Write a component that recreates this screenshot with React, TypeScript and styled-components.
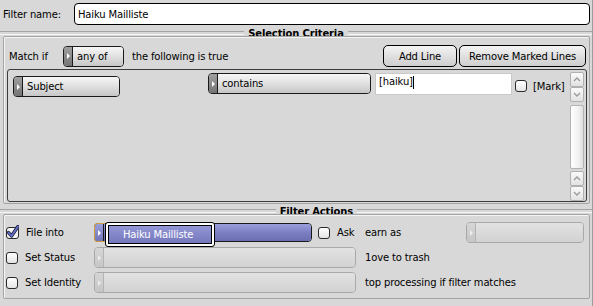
import React from "react";
import styled, { createGlobalStyle, css } from "styled-components";

const PageStyle = createGlobalStyle`
  html, body {
    margin: 0;
    padding: 0;
    background: #d8d8d8;
  }
  body {
    font-family: "DejaVu Sans", "Liberation Sans", sans-serif;
    font-size: 10px;
    letter-spacing: -0.15px;
    color: #000;
  }
  * { box-sizing: border-box; }
`;

const Window = styled.div`
  width: 593px;
  height: 306px;
  background: #d8d8d8;
  border-right: 1px solid #9c9c9c;
  display: flex;
  flex-direction: column;
  overflow: hidden;
`;

const NameRow = styled.div`
  display: flex;
  align-items: center;
  padding: 3px 2px 0 3px;
  height: 25px;
`;

const Label = styled.span`
  white-space: nowrap;
`;

const NameLabel = styled(Label)`
  width: 71px;
`;

const TextField = styled.div<{ $width?: number; $radius?: number }>`
  height: 22px;
  ${(p) => (p.$width ? css`width: ${p.$width}px;` : css`flex: 1;`)}
  background: #fff;
  border: 1px solid ${(p) => (p.$radius ? "#000" : "#c8c8c8")};
  border-radius: ${(p) => p.$radius ?? 0}px;
  padding: 0 3px;
  display: flex;
  align-items: center;
`;

const Caret = styled.span`
  display: inline-block;
  width: 1px;
  height: 13px;
  background: #000;
`;

const Header = styled.div<{ $left: number; $right: number; $top: number }>`
  display: flex;
  align-items: center;
  height: 12px;
  margin-top: ${(p) => p.$top}px;
  gap: 4px;
  &::before,
  &::after {
    content: "";
    height: 2px;
    border-top: 1px solid #a4a4a4;
    border-bottom: 1px solid #f4f4f4;
  }
  &::before { flex: ${(p) => p.$left}; }
  &::after { flex: ${(p) => p.$right}; }
`;

const Title = styled.span`
  font-weight: bold;
  white-space: nowrap;
`;

const Box = styled.section<{ $pad: string }>`
  margin: -3px 2px 0 3px;
  border: 1px solid #a4a4a4;
  border-radius: 2px;
  box-shadow: inset 1px 1px 0 #f4f4f4;
  padding: ${(p) => p.$pad};
  display: flex;
  flex-direction: column;
`;

const MatchRow = styled.div`
  display: flex;
  align-items: center;
  height: 22px;
  padding-left: 2px;
`;

const Button = styled.button<{ $width: number }>`
  height: 22px;
  width: ${(p) => p.$width}px;
  font: inherit;
  letter-spacing: inherit;
  color: #000;
  border: 1px solid #000;
  border-radius: 5px;
  background: linear-gradient(#f4f4f4, #dcdcdc 60%, #cfcfcf);
  padding: 0;
`;

const Spacer = styled.div`
  flex: 1;
`;

const ButtonGroup = styled.div`
  display: flex;
  gap: 2px;
  margin-right: 1px;
`;

const List = styled.div`
  margin-top: 2px;
  height: 133px;
  border: 1px solid #3c3c3c;
  border-radius: 3px;
  display: flex;
  padding-right: 2px;
`;

const ListContent = styled.div`
  flex: 1;
  display: flex;
  align-items: flex-start;
  padding: 3px 0 0 5px;
`;

const Scroll = styled.div`
  width: 14px;
  display: flex;
  flex-direction: column;
  padding-top: 2px;
`;

const ArrowBtn = styled.div`
  height: 15px;
  border: 1px solid #b0b0b0;
  border-radius: 2px;
  background: linear-gradient(#fafafa, #e2e2e2);
  display: flex;
  align-items: center;
  justify-content: center;
`;

const Thumb = styled.div`
  flex: 1;
  margin: 3px 0 2px;
  border: 1px solid #b4b4b4;
  border-radius: 2px;
  background: linear-gradient(90deg, #ffffff, #f2f2f2 60%, #dedede);
`;

const Field = styled.div<{ $width: number; $disabled?: boolean; $height?: number }>`
  position: relative;
  width: ${(p) => p.$width}px;
  height: ${(p) => p.$height ?? 21}px;
  display: flex;
  border: 1px solid ${(p) => (p.$disabled ? "#a8a8a8" : "#1a1a1a")};
  border-radius: 4px;
  flex-shrink: 0;
`;

const FieldArrow = styled.div<{ $disabled?: boolean; $focus?: boolean }>`
  width: 9px;
  border-radius: 3px 0 0 3px;
  border-right: 1px solid ${(p) => (p.$disabled ? "#b4b4b4" : "#1a1a1a")};
  background: ${(p) =>
    p.$disabled
      ? "linear-gradient(#d6d6d6, #c6c6c6)"
      : p.$focus
      ? "linear-gradient(#9a9ed8, #7276b8)"
      : "linear-gradient(#a0a0a0, #747474)"};
  ${(p) => p.$focus && css`box-shadow: 0 0 0 1px #d0a040;`}
  display: flex;
  align-items: center;
  justify-content: center;
  &::after {
    content: "";
    border-left: 3px solid ${(p) => (p.$disabled ? "#ececec" : "#fff")};
    border-top: 3px solid transparent;
    border-bottom: 3px solid transparent;
  }
`;

const FieldLabel = styled.div<{ $disabled?: boolean; $selected?: boolean }>`
  flex: 1;
  border-radius: 0 3px 3px 0;
  padding-left: 4px;
  display: flex;
  align-items: center;
  background: ${(p) =>
    p.$selected
      ? "linear-gradient(#9a9edc, #7c80c2 50%, #6a6eb2)"
      : p.$disabled
      ? "linear-gradient(#e2e2e2, #d2d2d2)"
      : "linear-gradient(#f6f6f6, #e0e0e0 50%, #c6c6c6)"};
  white-space: nowrap;
`;

const Popup = styled.div`
  position: absolute;
  left: 10px;
  top: -2px;
  width: 110px;
  height: 25px;
  border: 1px solid #000;
  border-radius: 3px;
  background: #fff;
  padding: 2px;
`;

const PopupItem = styled.div`
  height: 100%;
  border: 1px solid #000;
  background: linear-gradient(#9296d6, #7579bc);
  color: #fff;
  padding-left: 14px;
  display: flex;
  align-items: center;
`;

const Check = styled.div`
  width: 12px;
  height: 12px;
  border: 1px solid #2a2a2a;
  border-radius: 3px;
  background: linear-gradient(#ffffff, #e4e4e4);
  flex-shrink: 0;
`;

const CheckLabel = styled.div<{ $gap?: number }>`
  display: flex;
  align-items: center;
  gap: ${(p) => p.$gap ?? 7}px;
`;

const Actions = styled.div`
  display: grid;
  grid-template-columns: 88px 271px 1fr;
  grid-auto-rows: 25px;
  align-items: center;
`;

const Cell = styled.div`
  display: flex;
  align-items: center;
`;

const CheckedBox = () => (
  <svg width="13" height="14" viewBox="0 0 13 14" style={{ marginTop: -2 }}>
    <rect x="0.5" y="2.5" width="12" height="11" rx="2.5" fill="#f4f4f4" stroke="#2a2a2a" />
    <path d="M2.5 7.5 L5.5 11 L12 1.5" fill="none" stroke="#1c1c3c" strokeWidth="3.4" strokeLinecap="round" strokeLinejoin="round" />
    <path d="M2.5 7.5 L5.5 11 L12 1.5" fill="none" stroke="#6470c8" strokeWidth="1.8" strokeLinecap="round" strokeLinejoin="round" />
  </svg>
);

const Chevron = ({ up }: { up?: boolean }) => (
  <svg width="8" height="5" viewBox="0 0 8 5">
    <path d={up ? "M1 4 L4 1 L7 4" : "M1 1 L4 4 L7 1"} fill="none" stroke="#9a9a9a" strokeWidth="1.3" />
  </svg>
);

type MenuProps = {
  width: number;
  label?: string;
  disabled?: boolean;
  selected?: boolean;
  height?: number;
  children?: React.ReactNode;
};

const MenuField = ({ width, label, disabled, selected, height, children }: MenuProps) => (
  <Field $width={width} $disabled={disabled} $height={height}>
    <FieldArrow $disabled={disabled} $focus={selected} />
    <FieldLabel $disabled={disabled} $selected={selected}>
      {label}
    </FieldLabel>
    {children}
  </Field>
);

const App = () => {
  return (
    <>
      <PageStyle />
      <Window>
        <NameRow>
          <NameLabel>Filter name:</NameLabel>
          <TextField $radius={4}>Haiku Mailliste</TextField>
        </NameRow>

        <Header $top={2} $left={1} $right={1}>
          <Title>Selection Criteria</Title>
        </Header>
        <Box $pad="8px 2px 1px 3px">
          <MatchRow>
            <Label style={{ width: 54 }}>Match if</Label>
            <MenuField width={61} label="any of" />
            <Label style={{ marginLeft: 8 }}>the following is true</Label>
            <Spacer />
            <ButtonGroup>
              <Button $width={74}>Add Line</Button>
              <Button $width={127}>Remove Marked Lines</Button>
            </ButtonGroup>
          </MatchRow>
          <List>
            <ListContent>
              <div style={{ marginTop: 3 }}>
                <MenuField width={107} label="Subject" />
              </div>
              <div style={{ marginLeft: 88 }}>
                <MenuField width={163} label="contains" />
              </div>
              <TextField $width={137} style={{ marginLeft: 4, alignItems: "flex-start", paddingTop: 2 }}>
                [haiku]
                <Caret />
              </TextField>
              <CheckLabel $gap={6} style={{ marginLeft: 3, marginTop: 7 }}>
                <Check />
                <Label>[Mark]</Label>
              </CheckLabel>
            </ListContent>
            <Scroll>
              <ArrowBtn><Chevron up /></ArrowBtn>
              <ArrowBtn><Chevron /></ArrowBtn>
              <Thumb />
              <ArrowBtn><Chevron up /></ArrowBtn>
              <ArrowBtn><Chevron /></ArrowBtn>
            </Scroll>
          </List>
        </Box>

        <Header $top={1} $left={271} $right={231}>
          <Title>Filter Actions</Title>
        </Header>
        <Box $pad="5px 2px 3px 2px">
          <Actions>
            <Cell>
              <CheckLabel>
                <CheckedBox />
                <Label>File into</Label>
              </CheckLabel>
            </Cell>
            <Cell>
              <MenuField width={218} height={19} selected>
                <Popup>
                  <PopupItem>Haiku Mailliste</PopupItem>
                </Popup>
              </MenuField>
              <CheckLabel style={{ marginLeft: 6 }}>
                <Check />
                <Label>Ask</Label>
              </CheckLabel>
            </Cell>
            <Cell>
              <Label>earn as</Label>
              <Spacer />
              <div style={{ marginRight: 3 }}>
                <MenuField width={118} disabled />
              </div>
            </Cell>

            <Cell>
              <CheckLabel>
                <Check />
                <Label>Set Status</Label>
              </CheckLabel>
            </Cell>
            <Cell>
              <MenuField width={262} disabled />
            </Cell>
            <Cell>
              <Label>1ove to trash</Label>
            </Cell>

            <Cell>
              <CheckLabel>
                <Check />
                <Label>Set Identity</Label>
              </CheckLabel>
            </Cell>
            <Cell>
              <MenuField width={262} disabled />
            </Cell>
            <Cell>
              <Label>top processing if filter matches</Label>
            </Cell>
          </Actions>
        </Box>
      </Window>
    </>
  );
};

export default App;
